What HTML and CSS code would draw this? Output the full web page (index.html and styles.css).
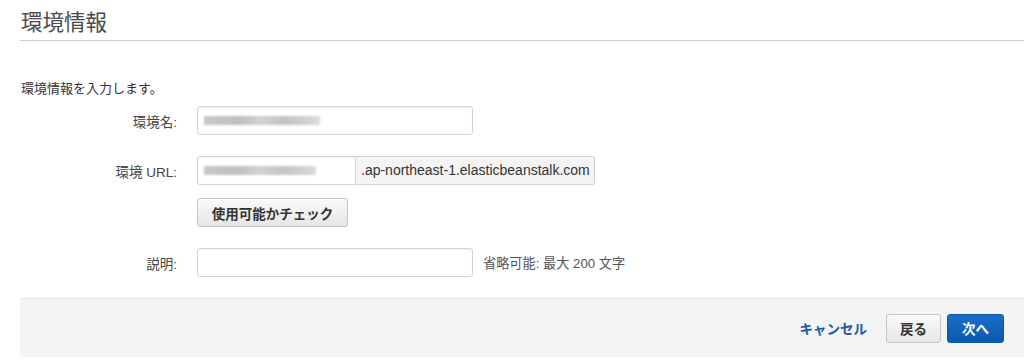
FILE: index.html
```html
<!DOCTYPE html>
<html lang="ja">
<head>
  <meta charset="UTF-8">
  <title>環境情報</title>
  <link rel="stylesheet" href="styles.css">
</head>
<body>
  <div class="page">
    <h2 class="page-title">環境情報</h2>
    <p class="intro">環境情報を入力します。</p>

    <div class="form">
      <div class="form-row">
        <label class="form-label">環境名:</label>
        <div class="form-field">
          <div class="text-input wide"><span class="blur"></span></div>
        </div>
      </div>

      <div class="form-row url-row">
        <label class="form-label">環境 URL:</label>
        <div class="form-field">
          <div class="input-group">
            <div class="text-input narrow"><span class="blur short"></span></div>
            <span class="addon">.ap-northeast-1.elasticbeanstalk.com</span>
          </div>
        </div>
      </div>

      <div class="form-row check-row">
        <span></span>
        <div class="form-field">
          <button class="btn">使用可能かチェック</button>
        </div>
      </div>

      <div class="form-row desc-row">
        <label class="form-label">説明:</label>
        <div class="form-field">
          <div class="text-input wide"></div>
          <span class="hint">省略可能: 最大 200 文字</span>
        </div>
      </div>
    </div>
  </div>

  <div class="footer">
    <a class="cancel-link" href="#">キャンセル</a>
    <button class="btn">戻る</button>
    <button class="btn btn-primary">次へ</button>
  </div>
</body>
</html>
```

FILE: styles.css
```css
body {
  margin: 0;
  background-color: #fff;
  color: #444;
  font-family: "Liberation Sans", Arial, "Noto Sans CJK JP", sans-serif;
  font-size: 13px;
}
.page {
  padding: 0 0 0 20px;
}
.page-title {
  margin: 0;
  padding: 10px 0 0 1px;
  height: 41px;
  box-sizing: border-box;
  font-size: 21.5px;
  font-weight: normal;
  line-height: 26px;
  color: #4a4a4a;
  border-bottom: 1px solid #ccc;
}
.intro {
  margin: 40px 0 0 1px;
  font-size: 13px;
  line-height: 16px;
  color: #333;
}
.form {
  margin-top: 9px;
}
.form-row {
  display: grid;
  grid-template-columns: 157px auto;
  column-gap: 20px;
  align-items: center;
}
.url-row {
  margin-top: 21px;
}
.check-row {
  margin-top: 13px;
}
.desc-row {
  margin-top: 21px;
}
.form-label {
  text-align: right;
  font-size: 13.5px;
  color: #444;
}
.form-field {
  display: flex;
  align-items: center;
}
.text-input {
  height: 29px;
  box-sizing: border-box;
  border: 1px solid #d4d4d4;
  border-radius: 3px;
  background-color: #fff;
  box-shadow: inset 0 1px 2px rgba(0, 0, 0, 0.06);
  display: flex;
  align-items: center;
  padding-left: 6px;
}
.text-input.wide {
  width: 276px;
}
.text-input.narrow {
  width: 159px;
  border-radius: 3px 0 0 3px;
}
.blur {
  display: block;
  width: 116px;
  height: 9px;
  background: linear-gradient(90deg, #c8c8c8 0%, #c0c0c0 30%, #d2d2d2 50%, #c4c4c4 70%, #dadada 100%);
  filter: blur(1px);
}
.blur.short {
  width: 112px;
}
.input-group {
  display: flex;
}
.addon {
  height: 29px;
  box-sizing: border-box;
  border: 1px solid #d4d4d4;
  border-left: none;
  border-radius: 0 3px 3px 0;
  background-color: #f4f4f4;
  padding: 0 4px 0 5px;
  line-height: 27px;
  font-size: 14px;
  color: #333;
}
.btn {
  height: 29px;
  box-sizing: border-box;
  padding: 0 11px;
  border: 1px solid #c4c4c4;
  border-radius: 3px;
  background: linear-gradient(#fafafa, #e6e6e6);
  color: #333;
  font-family: inherit;
  font-size: 13px;
  font-weight: bold;
  cursor: pointer;
}
.check-row .btn {
  width: 151px;
  padding: 0;
  font-size: 13.5px;
}
.hint {
  margin-left: 10px;
  color: #555;
  font-size: 13.2px;
}
.footer {
  margin: 21px 0 0 20px;
  height: 59px;
  background-color: #f4f4f4;
  border-top: 1px solid #e8e8e8;
  box-sizing: border-box;
  display: flex;
  justify-content: flex-end;
  align-items: center;
  padding-right: 20px;
}
.cancel-link {
  color: #1a5aa8;
  font-size: 13.5px;
  font-weight: bold;
  text-decoration: none;
  margin-right: 19px;
}
.footer .btn {
  width: 55px;
  padding: 0;
  font-size: 13.5px;
}
.footer .btn-primary {
  margin-left: 6px;
  width: 57px;
  border-color: #0a58a8;
  background: linear-gradient(#1a6fc8, #0a59ae);
  color: #fff;
}
```
